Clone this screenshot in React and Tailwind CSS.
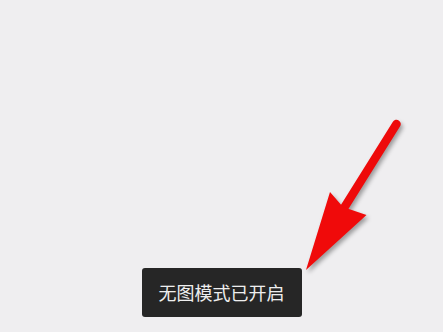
import React from 'react';

function Arrow() {
  return (
    <svg
      className="absolute left-0 top-0 pointer-events-none drop-shadow-[2px_3px_2px_rgba(0,0,0,0.35)]"
      width="443"
      height="332"
      viewBox="0 0 443 332"
    >
      <line x1="396.5" y1="124" x2="344" y2="208" stroke="#ee0a0a" strokeWidth="8.5" strokeLinecap="round" />
      <polygon points="330,192 343,207 366.5,215 306,270" fill="#f00a0a" />
    </svg>
  );
}

export default function App() {
  return (
    <div className="relative w-[443px] h-[332px] overflow-hidden bg-[#efeef0] flex flex-col items-center justify-end pb-[15px] font-['Noto_Sans_CJK_SC','Noto_Sans',sans-serif]">
      <div className="w-[160px] h-[49px] rounded-[3px] bg-[#262626] flex items-center justify-center text-[18px] text-[#eeeeee]">
        无图模式已开启
      </div>
      <Arrow />
    </div>
  );
}
